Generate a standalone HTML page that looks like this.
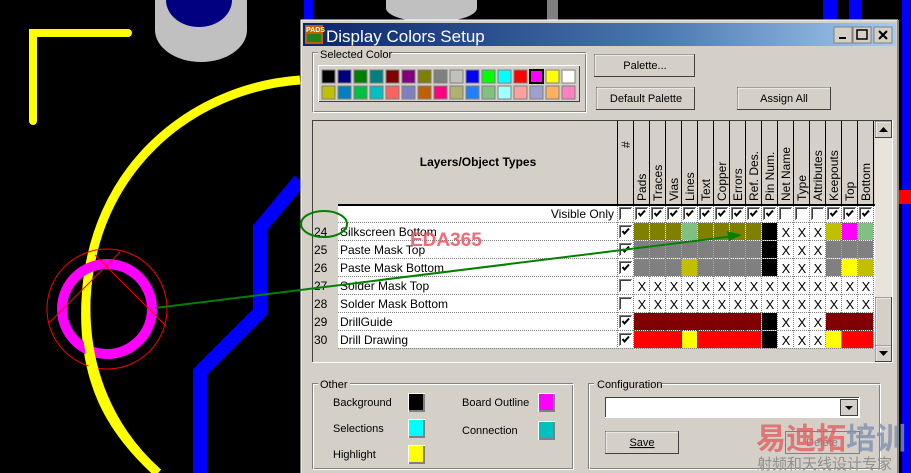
<!DOCTYPE html>
<html><head><meta charset="utf-8"><style>
*{margin:0;padding:0}
body{width:911px;height:473px;overflow:hidden;background:#000}
svg{display:block;font-family:"Liberation Sans",Arial,sans-serif}
</style></head><body>
<svg width="911" height="473" viewBox="0 0 911 473">
<defs>
<symbol id="cb" viewBox="0 0 13 13"><rect x="0" y="0" width="13" height="13" fill="#808080"/><rect x="1" y="1" width="12" height="12" fill="#fff"/><rect x="1" y="1" width="11" height="11" fill="#404040"/><rect x="2" y="2" width="10" height="10" fill="#fff"/></symbol>
<symbol id="ck" viewBox="0 0 13 13"><use href="#cb" width="13" height="13"/><path d="M3.5 6 L5.5 8.5 L10 3.5" stroke="#000" stroke-width="2" fill="none"/></symbol>
<linearGradient id="tg" x1="0" x2="1"><stop offset="0" stop-color="#0a246a"/><stop offset="0.6" stop-color="#4a78b0"/><stop offset="1" stop-color="#a6caf0"/></linearGradient>
</defs>

<!-- PCB background -->
<path d="M155 0 V30 A46 32 0 0 0 247 30 V0Z" fill="#c0c0c0"/>
<path d="M166 0 A33 27 0 0 0 232 0Z" fill="#000080"/>
<path d="M386 0 V8 A45 14 0 0 0 477 8 V0Z" fill="#c0c0c0"/>
<rect x="547" y="0" width="11" height="20" fill="#808080"/>
<rect x="304" y="0" width="9" height="20" fill="#0000ff"/>
<rect x="823" y="0" width="14" height="20" fill="#0000ff"/>
<rect x="849" y="0" width="13" height="20" fill="#0000ff"/>
<rect x="902" y="0" width="9" height="473" fill="#0000ff"/>
<rect x="899" y="190" width="12" height="14" fill="#ff0000"/>
<path d="M33 121 V33 H128" stroke="#ff0" stroke-width="8" fill="none" stroke-linecap="round"/>
<path d="M300 80 C190 88 92 170 86 300 C82 380 110 430 158 473" stroke="#ff0" stroke-width="9" fill="none"/>
<path d="M300 180 L260 228 V312 L200 372 V473" stroke="#0000ff" stroke-width="14" fill="none"/>
<circle cx="107" cy="309" r="45" fill="none" stroke="#ff00ff" stroke-width="10"/>
<circle cx="107" cy="309" r="60" fill="none" stroke="#ff0000" stroke-width="1"/>
<path d="M50 322 L120 252 M95 255 L166 326" stroke="#ff0000" stroke-width="1"/>
<path d="M86 300 C84 370 110 430 158 473" stroke="#ff0" stroke-width="9" fill="none"/>

<!-- Dialog -->
<rect x="301" y="20" width="598" height="453" fill="#d4d0c8"/>
<path d="M301 473 V20 H898" stroke="#fff" fill="none"/>
<path d="M898 20 V473" stroke="#404040"/>
<rect x="303" y="23" width="593" height="23" fill="url(#tg)"/>
<rect x="305" y="25" width="18" height="19" fill="#c06000"/>
<rect x="307" y="34" width="14" height="8" fill="#208020"/>
<text x="306" y="32" font-size="7" fill="#fff" font-weight="bold">PADS</text>
<text x="326" y="42" font-size="17" fill="#fff">Display Colors Setup</text>
<g>
<rect x="834" y="27" width="18" height="16" fill="#d4d0c8" stroke="#808080"/><path d="M839 38 h7" stroke="#000" stroke-width="2"/>
<rect x="853" y="27" width="18" height="16" fill="#d4d0c8" stroke="#808080"/><rect x="857" y="30" width="10" height="9" fill="none" stroke="#000" stroke-width="1.5"/>
<rect x="874" y="27" width="18" height="16" fill="#d4d0c8" stroke="#808080"/><path d="M879 31 l8 8 M887 31 l-8 8" stroke="#000" stroke-width="2"/>
</g>

<!-- Selected color -->
<rect x="312.5" y="52.5" width="273" height="59" fill="none" stroke="#808080"/>
<rect x="313.5" y="53.5" width="273" height="59" fill="none" stroke="#fff"/>
<rect x="318" y="52" width="74" height="10" fill="#d4d0c8"/>
<text x="320" y="58" font-size="11">Selected Color</text>
<rect x="318" y="65" width="262" height="37" fill="#fff"/>
<rect x="319" y="66" width="261" height="36" fill="#404040"/>
<rect x="319" y="66" width="260" height="35" fill="#d4d0c8"/>
<g stroke="#808080">
<rect x="322" y="70" width="13" height="13" fill="#000"/><rect x="338" y="70" width="13" height="13" fill="#000080"/><rect x="354" y="70" width="13" height="13" fill="#008000"/><rect x="370" y="70" width="13" height="13" fill="#008080"/><rect x="386" y="70" width="13" height="13" fill="#800000"/><rect x="402" y="70" width="13" height="13" fill="#800080"/><rect x="418" y="70" width="13" height="13" fill="#808000"/><rect x="434" y="70" width="13" height="13" fill="#808080"/><rect x="450" y="70" width="13" height="13" fill="#c0c0c0"/><rect x="466" y="70" width="13" height="13" fill="#0000ff"/><rect x="482" y="70" width="13" height="13" fill="#00ff00"/><rect x="498" y="70" width="13" height="13" fill="#00ffff"/><rect x="514" y="70" width="13" height="13" fill="#ff0000"/><rect x="530" y="70" width="13" height="13" fill="#ff00ff" stroke="#000" stroke-width="2"/><rect x="546" y="70" width="13" height="13" fill="#ffff00"/><rect x="562" y="70" width="13" height="13" fill="#fff"/>
<rect x="322" y="86" width="13" height="13" fill="#c0c000"/><rect x="338" y="86" width="13" height="13" fill="#0080c0"/><rect x="354" y="86" width="13" height="13" fill="#00c040"/><rect x="370" y="86" width="13" height="13" fill="#00c0c0"/><rect x="386" y="86" width="13" height="13" fill="#ff6060"/><rect x="402" y="86" width="13" height="13" fill="#8080c0"/><rect x="418" y="86" width="13" height="13" fill="#c06000"/><rect x="434" y="86" width="13" height="13" fill="#ff0080"/><rect x="450" y="86" width="13" height="13" fill="#b0b070"/><rect x="466" y="86" width="13" height="13" fill="#2080ff"/><rect x="482" y="86" width="13" height="13" fill="#80c080"/><rect x="498" y="86" width="13" height="13" fill="#a0ffff"/><rect x="514" y="86" width="13" height="13" fill="#ffa0a0"/><rect x="530" y="86" width="13" height="13" fill="#a0a0d0"/><rect x="546" y="86" width="13" height="13" fill="#ffb060"/><rect x="562" y="86" width="13" height="13" fill="#ff80c0"/>
</g>

<!-- Buttons -->
<g font-size="11" text-anchor="middle">
<rect x="594.5" y="54.5" width="100" height="22" fill="#d4d0c8" stroke="#404040"/><path d="M595 76 V55 H694" stroke="#fff" fill="none"/><text x="645" y="69">Palette...</text>
<rect x="596.5" y="87.5" width="98" height="22" fill="#d4d0c8" stroke="#404040"/><path d="M597 109 V88 H694" stroke="#fff" fill="none"/><text x="646" y="102">Default Palette</text>
<rect x="737.5" y="87.5" width="93" height="22" fill="#d4d0c8" stroke="#404040"/><path d="M738 109 V88 H830" stroke="#fff" fill="none"/><text x="784" y="102">Assign All</text>
</g>

<!-- Grid frame -->
<rect x="312" y="120" width="581" height="243" fill="#fff"/>
<rect x="312" y="120" width="580" height="242" fill="#404040"/>
<rect x="313" y="121" width="579" height="241" fill="#d4d0c8"/>
<rect x="338" y="121" width="537" height="84" fill="#d4d0c8"/>
<rect x="338" y="205" width="537" height="143" fill="#fff"/>
<path d="M338 205 H875" stroke="#000" stroke-width="2"/>
<g stroke="#000"><path d="M617.5 121 V205 M633.5 121 V205 M649.5 121 V205 M665.5 121 V205 M681.5 121 V205 M697.5 121 V205 M713.5 121 V205 M729.5 121 V205 M745.5 121 V205 M761.5 121 V205 M777.5 121 V205 M793.5 121 V205 M809.5 121 V205 M825.5 121 V205 M841.5 121 V205 M857.5 121 V205 M873.5 121 V205"/></g>
<text x="478" y="166" font-size="12" font-weight="bold" text-anchor="middle">Layers/Object Types</text>
<g font-size="12">
<text transform="translate(630,148) rotate(-90)" x="0" y="0">#</text>
<text transform="translate(646,201) rotate(-90)">Pads</text>
<text transform="translate(662,201) rotate(-90)">Traces</text>
<text transform="translate(678,201) rotate(-90)">Vias</text>
<text transform="translate(694,201) rotate(-90)">Lines</text>
<text transform="translate(710,201) rotate(-90)">Text</text>
<text transform="translate(726,201) rotate(-90)">Copper</text>
<text transform="translate(742,201) rotate(-90)">Errors</text>
<text transform="translate(758,201) rotate(-90)">Ref. Des.</text>
<text transform="translate(774,201) rotate(-90)">Pin Num.</text>
<text transform="translate(790,201) rotate(-90)">Net Name</text>
<text transform="translate(806,201) rotate(-90)">Type</text>
<text transform="translate(822,201) rotate(-90)">Attributes</text>
<text transform="translate(838,201) rotate(-90)">Keepouts</text>
<text transform="translate(854,201) rotate(-90)">Top</text>
<text transform="translate(870,201) rotate(-90)">Bottom</text>
</g>
<text x="614" y="218" font-size="12" text-anchor="end">Visible Only</text>

<!-- dotted grid lines -->
<g stroke="#808080" stroke-dasharray="1,1">
<path d="M338 222.5 H874 M338 240.5 H874 M338 258.5 H874 M338 276.5 H874 M338 294.5 H874 M338 312.5 H874 M338 330.5 H874 M338 348.5 H874"/>
<path d="M617.5 206 V348 M633.5 206 V348 M649.5 206 V348 M665.5 206 V348 M681.5 206 V348 M697.5 206 V348 M713.5 206 V348 M729.5 206 V348 M745.5 206 V348 M761.5 206 V348 M777.5 206 V348 M793.5 206 V348 M809.5 206 V348 M825.5 206 V348 M841.5 206 V348 M857.5 206 V348 M873.5 206 V348"/>
</g>

<!-- row nums & names -->
<g font-size="12">
<text x="314" y="236">24</text><text x="340" y="236">Silkscreen Bottom</text>
<text x="314" y="254">25</text><text x="340" y="254">Paste Mask Top</text>
<text x="314" y="272">26</text><text x="340" y="272">Paste Mask Bottom</text>
<text x="314" y="290">27</text><text x="340" y="290">Solder Mask Top</text>
<text x="314" y="308">28</text><text x="340" y="308">Solder Mask Bottom</text>
<text x="314" y="326">29</text><text x="340" y="326">DrillGuide</text>
<text x="314" y="344">30</text><text x="340" y="344">Drill Drawing</text>
</g>

<!-- visible only checkboxes -->
<use href="#cb" x="619" y="207" width="13" height="13"/>
<use href="#ck" x="635" y="207" width="13" height="13"/><use href="#ck" x="651" y="207" width="13" height="13"/><use href="#ck" x="667" y="207" width="13" height="13"/><use href="#ck" x="683" y="207" width="13" height="13"/><use href="#ck" x="699" y="207" width="13" height="13"/><use href="#ck" x="715" y="207" width="13" height="13"/><use href="#ck" x="731" y="207" width="13" height="13"/><use href="#ck" x="747" y="207" width="13" height="13"/><use href="#ck" x="763" y="207" width="13" height="13"/>
<use href="#cb" x="779" y="207" width="13" height="13"/><use href="#cb" x="795" y="207" width="13" height="13"/><use href="#cb" x="811" y="207" width="13" height="13"/>
<use href="#ck" x="827" y="207" width="13" height="13"/><use href="#ck" x="843" y="207" width="13" height="13"/><use href="#ck" x="859" y="207" width="13" height="13"/>
<!-- # column -->
<use href="#ck" x="619" y="225" width="13" height="13"/><use href="#ck" x="619" y="243" width="13" height="13"/><use href="#ck" x="619" y="261" width="13" height="13"/><use href="#cb" x="619" y="279" width="13" height="13"/><use href="#cb" x="619" y="297" width="13" height="13"/><use href="#ck" x="619" y="315" width="13" height="13"/><use href="#ck" x="619" y="333" width="13" height="13"/>

<!-- color cells -->
<!-- row 24 y=223 -->
<g>
<rect x="634" y="223" width="15" height="17" fill="#808000"/><rect x="650" y="223" width="15" height="17" fill="#808000"/><rect x="666" y="223" width="15" height="17" fill="#808000"/><rect x="682" y="223" width="15" height="17" fill="#80c080"/><rect x="698" y="223" width="15" height="17" fill="#808000"/><rect x="714" y="223" width="15" height="17" fill="#808000"/><rect x="730" y="223" width="15" height="17" fill="#808000"/><rect x="746" y="223" width="15" height="17" fill="#808000"/><rect x="762" y="223" width="15" height="17" fill="#000"/><rect x="826" y="223" width="15" height="17" fill="#c0c000"/><rect x="842" y="223" width="15" height="17" fill="#ff00ff"/><rect x="858" y="223" width="15" height="17" fill="#80c080"/>
<!-- row 25 -->
<rect x="634" y="241" width="127" height="17" fill="#808080"/><rect x="762" y="241" width="15" height="17" fill="#000"/><rect x="826" y="241" width="47" height="17" fill="#808080"/>
<!-- row 26 -->
<rect x="634" y="259" width="127" height="17" fill="#808080"/><rect x="682" y="259" width="15" height="17" fill="#c0c000"/><rect x="762" y="259" width="15" height="17" fill="#000"/><rect x="826" y="259" width="15" height="17" fill="#808080"/><rect x="842" y="259" width="15" height="17" fill="#ffff00"/><rect x="858" y="259" width="15" height="17" fill="#c0c000"/>
<!-- row 29 -->
<rect x="634" y="313" width="127" height="17" fill="#800000"/><rect x="762" y="313" width="15" height="17" fill="#000"/><rect x="826" y="313" width="47" height="17" fill="#800000"/>
<!-- row 30 -->
<rect x="634" y="331" width="127" height="17" fill="#ff0000"/><rect x="682" y="331" width="15" height="17" fill="#ffff00"/><rect x="762" y="331" width="15" height="17" fill="#000"/><rect x="826" y="331" width="15" height="17" fill="#ffff00"/><rect x="842" y="331" width="31" height="17" fill="#ff0000"/>
</g>
<g stroke="#d4d0c8" stroke-dasharray="1,1" opacity="0.5">
<path d="M649.5 241 V276 M665.5 241 V276 M681.5 241 V276 M697.5 241 V276 M713.5 241 V276 M729.5 241 V276 M745.5 241 V276 M841.5 241 V276 M857.5 241 V276 M634 258.5 H761 M826 258.5 H873"/>
</g>
<g stroke="#000" stroke-dasharray="1,1" opacity="0.4">
<path d="M649.5 313 V348 M665.5 313 V348 M681.5 313 V348 M697.5 313 V348 M713.5 313 V348 M729.5 313 V348 M745.5 313 V348 M841.5 313 V348 M857.5 313 V348 M634 330.5 H761 M826 330.5 H873"/>
</g>
<!-- X marks -->
<g font-size="13" text-anchor="middle">
<text x="786" y="237">X</text><text x="802" y="237">X</text><text x="818" y="237">X</text>
<text x="786" y="255">X</text><text x="802" y="255">X</text><text x="818" y="255">X</text>
<text x="786" y="273">X</text><text x="802" y="273">X</text><text x="818" y="273">X</text>
<text x="642" y="291">X</text><text x="658" y="291">X</text><text x="674" y="291">X</text><text x="690" y="291">X</text><text x="706" y="291">X</text><text x="722" y="291">X</text><text x="738" y="291">X</text><text x="754" y="291">X</text><text x="770" y="291">X</text><text x="786" y="291">X</text><text x="802" y="291">X</text><text x="818" y="291">X</text><text x="834" y="291">X</text><text x="850" y="291">X</text><text x="866" y="291">X</text>
<text x="642" y="309">X</text><text x="658" y="309">X</text><text x="674" y="309">X</text><text x="690" y="309">X</text><text x="706" y="309">X</text><text x="722" y="309">X</text><text x="738" y="309">X</text><text x="754" y="309">X</text><text x="770" y="309">X</text><text x="786" y="309">X</text><text x="802" y="309">X</text><text x="818" y="309">X</text><text x="834" y="309">X</text><text x="850" y="309">X</text><text x="866" y="309">X</text>
<text x="786" y="327">X</text><text x="802" y="327">X</text><text x="818" y="327">X</text>
<text x="786" y="345">X</text><text x="802" y="345">X</text><text x="818" y="345">X</text>
</g>

<!-- scrollbar -->
<rect x="875" y="121" width="17" height="241" fill="#e8e4dc"/>
<rect x="875.5" y="121.5" width="16" height="16" fill="#d4d0c8" stroke="#404040"/><path d="M876 137 V122 H891" stroke="#fff" fill="none"/><path d="M879 132 h9 l-4.5 -5z" fill="#000"/>
<rect x="875.5" y="297.5" width="16" height="48" fill="#d4d0c8" stroke="#404040"/><path d="M876 345 V298 H891" stroke="#fff" fill="none"/>
<rect x="875.5" y="345.5" width="16" height="16" fill="#d4d0c8" stroke="#404040"/><path d="M876 361 V346 H891" stroke="#fff" fill="none"/><path d="M879 351 h9 l-4.5 5z" fill="#000"/>

<!-- EDA365 watermark -->
<text x="410" y="246" font-size="19" font-weight="bold" fill="#f05060" opacity="0.85">EDA365</text>

<!-- green annotations -->
<ellipse cx="324" cy="224" rx="23" ry="13" fill="none" stroke="#008000" stroke-width="2"/>
<path d="M155 308 L735 236" stroke="#008000" stroke-width="2"/>
<path d="M742 235 L727 231 L729 241Z" fill="#008000"/>

<!-- Other group -->
<rect x="312.5" y="383.5" width="260" height="85" fill="none" stroke="#808080"/>
<rect x="313.5" y="384.5" width="260" height="85" fill="none" stroke="#fff"/>
<rect x="318" y="378" width="32" height="12" fill="#d4d0c8"/>
<text x="320" y="388" font-size="11">Other</text>
<g font-size="11">
<text x="333" y="406">Background</text><text x="333" y="432">Selections</text><text x="333" y="458">Highlight</text>
<text x="462" y="406">Board Outline</text><text x="462" y="434">Connection</text>
</g>
<g>
<rect x="408" y="393" width="17" height="19" fill="#fff"/><rect x="409" y="394" width="16" height="18" fill="#808080"/><rect x="409" y="394" width="14" height="16" fill="#000"/>
<rect x="408" y="419" width="17" height="19" fill="#fff"/><rect x="409" y="420" width="16" height="18" fill="#808080"/><rect x="409" y="420" width="14" height="16" fill="#00ffff"/>
<rect x="408" y="445" width="17" height="19" fill="#fff"/><rect x="409" y="446" width="16" height="18" fill="#808080"/><rect x="409" y="446" width="14" height="16" fill="#ffff00"/>
<rect x="538" y="393" width="17" height="19" fill="#fff"/><rect x="539" y="394" width="16" height="18" fill="#808080"/><rect x="539" y="394" width="14" height="16" fill="#ff00ff"/>
<rect x="538" y="421" width="17" height="19" fill="#fff"/><rect x="539" y="422" width="16" height="18" fill="#808080"/><rect x="539" y="422" width="14" height="16" fill="#00c0c0"/>
</g>

<!-- Configuration group -->
<rect x="588.5" y="383.5" width="291" height="85" fill="none" stroke="#808080"/>
<rect x="589.5" y="384.5" width="291" height="85" fill="none" stroke="#fff"/>
<rect x="594" y="378" width="68" height="12" fill="#d4d0c8"/>
<text x="597" y="388" font-size="11">Configuration</text>
<rect x="605" y="397" width="255" height="21" fill="#fff"/>
<rect x="605" y="397" width="254" height="20" fill="#404040"/>
<rect x="606" y="398" width="253" height="19" fill="#fff"/>
<rect x="840.5" y="399.5" width="17" height="16" fill="#d4d0c8" stroke="#404040"/><path d="M845 406 h8 l-4 4z" fill="#000"/>
<rect x="605.5" y="431.5" width="73" height="22" fill="#d4d0c8" stroke="#404040"/><path d="M606 453 V432 H678" stroke="#fff" fill="none"/>
<text x="642" y="446" font-size="11" text-anchor="middle" text-decoration="underline">Save</text>
<rect x="785.5" y="431.5" width="74" height="22" fill="#d4d0c8" stroke="#808080"/>
<text x="822" y="446" font-size="11" text-anchor="middle" fill="#808080">Delete</text>

<!-- Chinese watermark -->
<text x="756" y="449" font-size="30" font-weight="bold" fill="#e06060" opacity="0.8" font-family="'Noto Sans CJK SC',sans-serif">易迪拓</text>
<text x="846" y="449" font-size="30" font-weight="bold" fill="#8090b0" opacity="0.8" font-family="'Noto Sans CJK SC',sans-serif">培训</text>
<text x="757" y="469" font-size="15" fill="#909090" font-family="'Noto Sans CJK SC',sans-serif">射频和天线设计专家</text>
</svg>
</body></html>
